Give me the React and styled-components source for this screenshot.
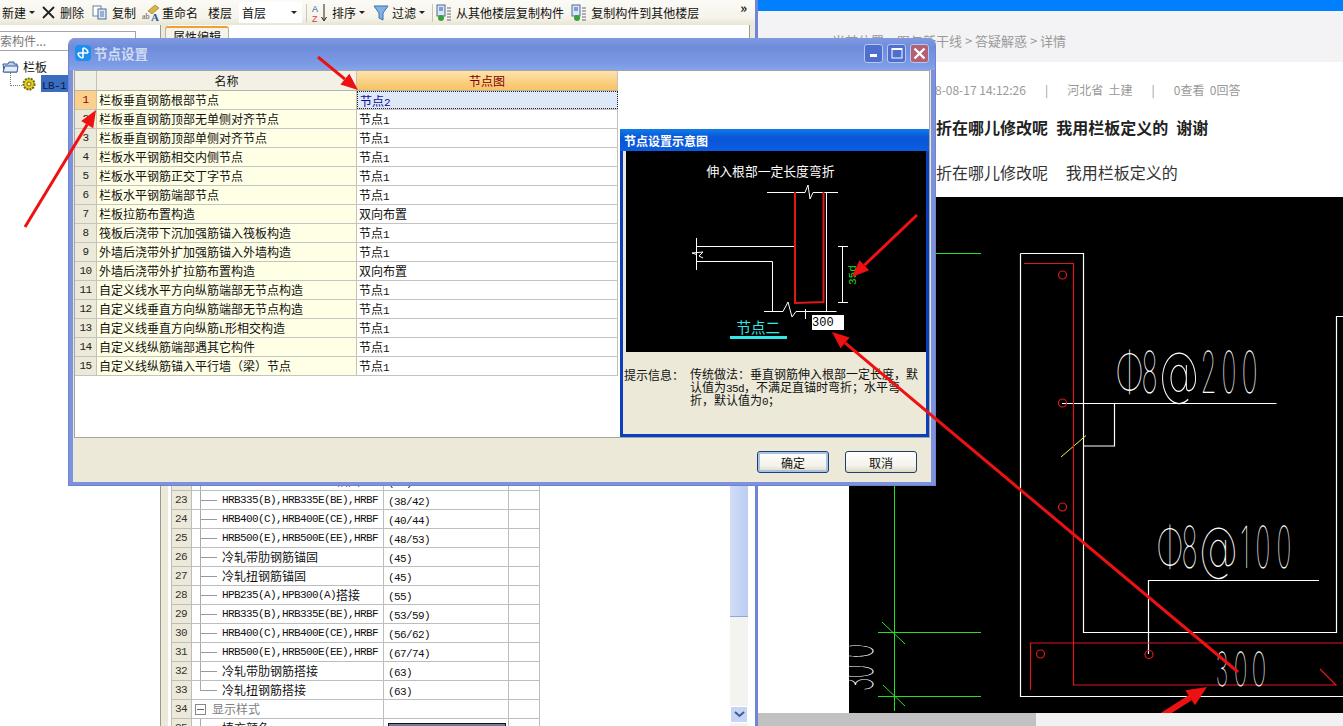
import styled, { createGlobalStyle } from "styled-components";

const GlobalStyle = createGlobalStyle`
  html, body {
    margin: 0;
    padding: 0;
    overflow: hidden;
    background: #fff;
  }
  body {
    font-family: "Noto Sans CJK SC", "Liberation Sans", sans-serif;
    font-size: 12px;
    color: #111;
  }
  * { box-sizing: border-box; }
`;

const nodeRows = [
  ["栏板垂直钢筋根部节点", "节点2"],
  ["栏板垂直钢筋顶部无单侧对齐节点", "节点1"],
  ["栏板垂直钢筋顶部单侧对齐节点", "节点1"],
  ["栏板水平钢筋相交内侧节点", "节点1"],
  ["栏板水平钢筋正交丁字节点", "节点1"],
  ["栏板水平钢筋端部节点", "节点1"],
  ["栏板拉筋布置构造", "双向布置"],
  ["筏板后浇带下沉加强筋锚入筏板构造", "节点1"],
  ["外墙后浇带外扩加强筋锚入外墙构造", "节点1"],
  ["外墙后浇带外扩拉筋布置构造", "双向布置"],
  ["自定义线水平方向纵筋端部无节点构造", "节点1"],
  ["自定义线垂直方向纵筋端部无节点构造", "节点1"],
  ["自定义线垂直方向纵筋L形相交构造", "节点1"],
  ["自定义线纵筋端部遇其它构件", "节点1"],
  ["自定义线纵筋锚入平行墙（梁）节点", "节点1"],
];

const propRows = [
  [22, "HPB235(A),HPB300(A)锚固", "(35)"],
  [23, "HRB335(B),HRB335E(BE),HRBF", "(38/42)"],
  [24, "HRB400(C),HRB400E(CE),HRBF", "(40/44)"],
  [25, "HRB500(E),HRB500E(EE),HRBF", "(48/53)"],
  [26, "冷轧带肋钢筋锚固", "(45)"],
  [27, "冷轧扭钢筋锚固", "(45)"],
  [28, "HPB235(A),HPB300(A)搭接", "(55)"],
  [29, "HRB335(B),HRB335E(BE),HRBF", "(53/59)"],
  [30, "HRB400(C),HRB400E(CE),HRBF", "(56/62)"],
  [31, "HRB500(E),HRB500E(EE),HRBF", "(67/74)"],
  [32, "冷轧带肋钢筋搭接", "(63)"],
  [33, "冷轧扭钢筋搭接", "(63)"],
];

// half width latin like the old bitmap font of the program
function Mixed({ text }) {
  return text
    .split(/([\x20-\x7e]+)/)
    .map((part, i) =>
      /^[\x20-\x7e]+$/.test(part) ? <Latin key={i}>{part}</Latin> : part
    );
}

function Arrow({ x1, y1, x2, y2, width = 3, head = 17, wing = 7 }) {
  const len = Math.hypot(x2 - x1, y2 - y1);
  const ux = (x2 - x1) / len;
  const uy = (y2 - y1) / len;
  const bx = x2 - ux * head;
  const by = y2 - uy * head;
  const points = `${x2},${y2} ${bx - uy * wing},${by + ux * wing} ${bx + uy * wing},${by - ux * wing}`;
  return (
    <g>
      <line x1={x1} y1={y1} x2={bx} y2={by} stroke="#ee1111" strokeWidth={width} />
      <polygon points={points} fill="#ee1111" />
    </g>
  );
}

// cad text: every glyph squeezed to the width it has in the drawing,
// the extra 24% is for the side bearings of the font
function CadLabel({ y, size, glyphs, ...rest }) {
  return (
    <g {...rest}>
      {glyphs.map(([ch, x, w], i) => (
        <CadText
          key={i}
          x={x - w * 0.12}
          y={y}
          fontSize={size}
          textLength={w * 1.24}
          lengthAdjust="spacingAndGlyphs"
        >
          {ch}
        </CadText>
      ))}
    </g>
  );
}

function CopyIcon() {
  return (
    <svg width="15" height="15" viewBox="0 0 15 15">
      <rect x="1" y="1" width="8" height="10" fill="#fff" stroke="#6a7f9e" />
      <rect x="6" y="4" width="8" height="10" fill="#dfe8f6" stroke="#4a6a9a" />
      <path d="M8 7h4M8 9h4M8 11h4" stroke="#5577aa" />
    </svg>
  );
}

function RenameIcon() {
  return (
    <svg width="18" height="18" viewBox="0 0 18 18">
      <path d="M6 7 13 1l4 3-7 6z" fill="#d9b44a" stroke="#8a6d20" strokeWidth=".6" />
      <text x="0" y="15" fontSize="8" fill="#555" fontFamily="Liberation Serif">ab</text>
      <text x="9" y="17" fontSize="11" fontWeight="700" fill="#2a55a5" fontFamily="Liberation Serif">A</text>
    </svg>
  );
}

function SortIcon() {
  return (
    <svg width="18" height="20" viewBox="0 0 18 20">
      <text x="1" y="9" fontSize="9" fill="#3355aa" fontFamily="Liberation Sans">A</text>
      <text x="1" y="19" fontSize="9" fill="#cc4444" fontFamily="Liberation Sans">Z</text>
      <path d="M13 1v16M10.5 14l2.5 4 2.5-4" stroke="#222" fill="none" />
    </svg>
  );
}

function FilterIcon() {
  return (
    <svg width="16" height="16" viewBox="0 0 16 16">
      <path d="M1 1h14L10 8v7L6 13V8z" fill="#7fb2e5" stroke="#3d6fa8" />
    </svg>
  );
}

function FloorCopyIcon({ flip }) {
  return (
    <svg width="16" height="18" viewBox="0 0 16 18">
      <rect x="1" y="1" width="8" height="11" fill="#dbe6f6" stroke="#4a6a9a" />
      <path d="M3 4h4M3 6h4" stroke="#3355aa" />
      <path d="M11 4h4M11 7h4M11 10h4M11 13h4M11 16h4" stroke="#667" />
      <circle cx={flip ? 6 : 5} cy="14" r="3" fill="#3aa03a" />
    </svg>
  );
}

function CadDrawing() {
  return (
    <CadSvg viewBox="849 197 494 516">
      <g stroke="#22e022" fill="none">
        <path d="M936 253.5H981M878 632.5H981M878 696.5H981M894.5 486V711" />
        <path d="M882 622 905 644M883 685 905 706" />
      </g>
      <g stroke="#fff" fill="none" strokeWidth="1.2">
        <path d="M1020.5 253.5H1083.5V632.5H1336.5V316.5H1343M1020.5 253.5V696.5H1343" />
        <path d="M1062 403.5H1276.5M1114.5 403.5V446H1083.5" />
        <path d="M1148.5 654V580.5H1319" />
      </g>
      <path d="M1061 457 1086 435.5" stroke="#eeee44" fill="none" />
      <g stroke="#e01818" fill="none" strokeWidth="1.2">
        <path d="M1024 263.5H1073.5V685H1336L1320 669" />
        <path d="M1343 643H1030.5V690" />
        <circle cx="1062.5" cy="275" r="4" />
        <circle cx="1062.5" cy="403" r="4" />
        <circle cx="1062.5" cy="507" r="4" />
        <circle cx="1040.5" cy="654" r="4" />
        <circle cx="1149" cy="654.5" r="4" />
      </g>
      <CadLabel
        y={393}
        size={58}
        glyphs={[
          ["Φ", 1118, 23],
          ["8", 1143, 13],
          ["@", 1163, 32],
          ["2", 1202, 13],
          ["0", 1223, 12],
          ["0", 1243, 13],
        ]}
      />
      <CadLabel
        y={568}
        size={58}
        glyphs={[
          ["Φ", 1159, 22],
          ["8", 1183, 13],
          ["@", 1203, 31],
          ["1", 1241, 8],
          ["0", 1257, 12],
          ["0", 1278, 12],
        ]}
      />
      <CadLabel
        y={686}
        size={47}
        glyphs={[
          ["3", 1217, 10],
          ["0", 1235, 11],
          ["0", 1253, 12],
        ]}
      />
      <CadLabel
        transform="translate(873 690) rotate(-90)"
        y={0}
        size={47}
        glyphs={[
          ["3", 0, 11],
          ["0", 13, 11],
          ["0", 33, 12],
        ]}
      />
      <Arrow x1={1160} y1={717} x2={1207} y2={687} width={6} head={20} wing={9} />
    </CadSvg>
  );
}

function NodeDiagram() {
  return (
    <DiagramSvg viewBox="626 152 298 201">
      <DiagramTitle x="770.5" y="177" textAnchor="middle">伸入根部一定长度弯折</DiagramTitle>
      <g stroke="#fff" fill="none">
        <path d="M767 193.5H805L808 186 810 200 813 193.5H838" />
        <path d="M826.5 193.5V313" />
        <path d="M696.5 247.5H794M696.5 262.5H772.5V312.5" />
        <path d="M696.5 239V271M696.5 255.5 692 254 703 253 699 257 703 259" />
        <path d="M764 312.5H783L788 303 792 318 796 312.5H836.5" />
        <path d="M805.5 310V320" />
        <path d="M842.5 247.5V303.5M838 247.5H848M838 303.5H848" />
      </g>
      <path d="M795 193V304L823.5 303V193" stroke="#e01818" strokeWidth="2" fill="none" />
      <DiagramDim transform="translate(856 286) rotate(-90)">35d</DiagramDim>
      <DiagramLabel x="736.5" y="334">节点二</DiagramLabel>
      <rect x="730" y="337" width="57" height="3" fill="#30e8e8" />
      <rect x="812" y="316" width="32" height="15" fill="#fff" />
      <DiagramValue x="812" y="327">300</DiagramValue>
    </DiagramSvg>
  );
}

export default function App() {
  return (
    <Page>
      <GlobalStyle />
      <AppWindow>
        <Toolbar>
          <ToolText $ml={2}>新建</ToolText>
          <Caret $ml={3} />
          <ToolIcon $ml={7}>
            <svg width="13" height="13" viewBox="0 0 13 13">
              <path d="M1 1 12 12M12 1 1 12" stroke="#222" strokeWidth="1.8" />
            </svg>
          </ToolIcon>
          <ToolText $ml={5}>删除</ToolText>
          <ToolIcon $ml={8}><CopyIcon /></ToolIcon>
          <ToolText $ml={5}>复制</ToolText>
          <ToolIcon $ml={6}><RenameIcon /></ToolIcon>
          <ToolText $ml={2}>重命名</ToolText>
          <ToolText $ml={10}>楼层</ToolText>
          <FloorSelect>
            首层
            <Caret />
          </FloorSelect>
          <ToolSep $ml={4} />
          <ToolIcon $ml={4}><SortIcon /></ToolIcon>
          <ToolText $ml={3}>排序</ToolText>
          <Caret $ml={3} />
          <ToolIcon $ml={8}><FilterIcon /></ToolIcon>
          <ToolText $ml={3}>过滤</ToolText>
          <Caret $ml={3} />
          <ToolSep $ml={7} />
          <ToolIcon $ml={3}><FloorCopyIcon /></ToolIcon>
          <ToolText $ml={4}>从其他楼层复制构件</ToolText>
          <ToolIcon $ml={7}><FloorCopyIcon flip /></ToolIcon>
          <ToolText $ml={4}>复制构件到其他楼层</ToolText>
          <More>»</More>
        </Toolbar>
        <Workspace>
          <TreePane>
            <SearchBox><SearchText>搜索构件...</SearchText></SearchBox>
            <TreeFolder>
              <svg width="17" height="13" viewBox="0 0 17 13">
                <path d="M1 4h5l1-2h5v2h3v8H2z" fill="#bcd0ec" stroke="#3d5f95" />
                <path d="M1 12 3 6h13l-1 6z" fill="#e4edf8" stroke="#3d5f95" />
              </svg>
              栏板
            </TreeFolder>
            <TreeLeaf>
              <TreeDots />
              <svg width="14" height="14" viewBox="0 0 14 14">
                <circle cx="7" cy="7" r="5.5" fill="#e8cc20" stroke="#6a6a10" strokeDasharray="2 1" strokeWidth="2" />
                <circle cx="7" cy="7" r="2" fill="#fff6a0" stroke="#6a6a10" />
              </svg>
              <TreeSelected><Latin>LB-1</Latin></TreeSelected>
            </TreeLeaf>
          </TreePane>
          <PropsPane>
            <TabStrip><PropsTab>属性编辑</PropsTab></TabStrip>
            <PropsBody>
              <PropsGrid>
                {propRows.map(([n, name, value], i) => (
                  <PropRow key={n}>
                    <PropNum>{n}</PropNum>
                    <PropName>
                      <TreeStub $last={i === propRows.length - 1} />
                      <Mixed text={name} />
                    </PropName>
                    <PropValue><Latin>{value}</Latin></PropValue>
                    <PropExtra />
                  </PropRow>
                ))}
                <PropRow>
                  <PropNum>34</PropNum>
                  <PropName>
                    <MinusBox />
                    <GroupLabel>显示样式</GroupLabel>
                  </PropName>
                  <PropValue />
                  <PropExtra />
                </PropRow>
                <PropRow>
                  <PropNum>35</PropNum>
                  <PropName><TreeStub />填充颜色</PropName>
                  <PropValue><Swatch /></PropValue>
                  <PropExtra />
                </PropRow>
              </PropsGrid>
              <ScrollBar>
                <ScrollThumb />
                <ScrollDown>
                  <svg width="11" height="7" viewBox="0 0 11 7">
                    <path d="M1 1l4.5 4L10 1" stroke="#3d5f95" strokeWidth="2" fill="none" />
                  </svg>
                </ScrollDown>
              </ScrollBar>
            </PropsBody>
          </PropsPane>
        </Workspace>
      </AppWindow>

      <Browser>
        <BlueBar />
        <Crumbs>当前位置 &gt; 跟与新干线 &gt; 答疑解惑 &gt; 详情</Crumbs>
        <Article>
          <Meta>
            <span>2018-08-17 14:12:26</span>
            <MetaSep>|</MetaSep>
            <span>河北省&nbsp;&nbsp;土建</span>
            <MetaSep>|</MetaSep>
            <span>0查看&nbsp;&nbsp;0回答</span>
          </Meta>
          <QuestionTitle>栏板钢筋弯折在哪儿修改呢 我用栏板定义的 谢谢</QuestionTitle>
          <QuestionBody>栏板钢筋弯折在哪儿修改呢{"   "}我用栏板定义的</QuestionBody>
          <CadImage><CadDrawing /></CadImage>
        </Article>
        <BottomScroll><BottomThumb /></BottomScroll>
      </Browser>

      <Dialog>
        <DialogTitle>
          <DialogIcon>
            <svg width="12" height="12" viewBox="0 0 12 12">
              <path d="M6 1v10M1 6h10M6 1a5 5 0 0 1 5 5M1 6a5 5 0 0 0 5 5" stroke="#fff" strokeWidth="1.6" fill="none" />
            </svg>
          </DialogIcon>
          <DialogCaption>节点设置</DialogCaption>
          <WinButtons>
            <WinButton>
              <svg width="10" height="10" viewBox="0 0 10 10"><rect x="1" y="6" width="7" height="3" fill="#fff" /></svg>
            </WinButton>
            <WinButton>
              <svg width="12" height="12" viewBox="0 0 12 12"><rect x="1" y="1.5" width="10" height="9.5" fill="none" stroke="#fff" /><rect x="1" y="1" width="10" height="2" fill="#fff" /></svg>
            </WinButton>
            <WinButton $close>
              <svg width="13" height="13" viewBox="0 0 13 13"><path d="M1.5 1.5l10 10M11.5 1.5l-10 10" stroke="#fff" strokeWidth="2.4" /></svg>
            </WinButton>
          </WinButtons>
        </DialogTitle>
        <DialogBody>
          <NodeTable>
            <NodeHead>
              <Corner />
              <HeadName>名称</HeadName>
              <HeadNode>节点图</HeadNode>
            </NodeHead>
            {nodeRows.map(([name, node], i) => (
              <NodeRow key={name}>
                <NodeNum $active={i === 0}>{i + 1}</NodeNum>
                <NodeName><Mixed text={name} /></NodeName>
                <NodeValue $active={i === 0}><Mixed text={node} /></NodeValue>
              </NodeRow>
            ))}
          </NodeTable>
          <PreviewPanel>
            <PreviewTitle>节点设置示意图</PreviewTitle>
            <PreviewCanvas><NodeDiagram /></PreviewCanvas>
            <TipArea>
              <TipLabel>提示信息：</TipLabel>
              <TipText>
                <TipLine><Mixed text="传统做法：垂直钢筋伸入根部一定长度，默" /></TipLine>
                <TipLine><Mixed text="认值为35d，不满足直锚时弯折；水平弯" /></TipLine>
                <TipLine><Mixed text="折，默认值为0；" /></TipLine>
              </TipText>
            </TipArea>
          </PreviewPanel>
        </DialogBody>
        <DialogFooter>
          <DialogButton $primary>确定</DialogButton>
          <DialogButton>取消</DialogButton>
        </DialogFooter>
      </Dialog>

      <Annotations viewBox="0 0 1343 726">
        <Arrow x1={318} y1={57} x2={358} y2={90} />
        <Arrow x1={25} y1={227} x2={96} y2={110} />
        <Arrow x1={917} y1={215} x2={852} y2={277} />
        <Arrow x1={1238} y1={672} x2={832} y2={332} />
      </Annotations>
    </Page>
  );
}

const Page = styled.div`
  position: relative;
  display: flex;
  width: 1343px;
  height: 726px;
  overflow: hidden;
`;

const Latin = styled.span`
  font-family: "Liberation Mono", monospace;
  font-size: 11px;
  letter-spacing: -0.6px;
  line-height: 1;
`;

/* left program window */
const AppWindow = styled.div`
  display: flex;
  flex-direction: column;
  width: 758px;
  height: 726px;
  border-right: 3px solid #6f86d6;
  background: #ece9d8;
`;

const Toolbar = styled.div`
  display: flex;
  align-items: center;
  height: 25px;
  flex-shrink: 0;
  background: linear-gradient(#fbfaf5, #f6f4ea 70%, #e8e5d4);
`;

const ToolText = styled.span`
  margin-left: ${(p) => p.$ml || 0}px;
  white-space: nowrap;
  line-height: 25px;
`;

const ToolIcon = styled.span`
  display: inline-flex;
  margin-left: ${(p) => p.$ml || 0}px;
`;

const Caret = styled.span`
  flex-shrink: 0;
  margin-left: ${(p) => p.$ml || 0}px;
  border-left: 3px solid transparent;
  border-right: 3px solid transparent;
  border-top: 3px solid #222;
`;

const ToolSep = styled.span`
  width: 1px;
  height: 18px;
  margin-left: ${(p) => p.$ml || 0}px;
  background: #c8c6b4;
`;

const FloorSelect = styled.div`
  display: flex;
  align-items: center;
  justify-content: space-between;
  width: 63px;
  height: 21px;
  margin-left: 7px;
  padding: 0 5px 0 3px;
  background: #fff;
`;

const More = styled.span`
  margin-left: 41px;
  font-size: 13px;
  font-weight: 700;
  line-height: 14px;
  align-self: flex-start;
  padding-top: 1px;
`;

const Workspace = styled.div`
  display: flex;
  flex: 1;
  min-height: 0;
`;

const TreePane = styled.div`
  width: 161px;
  flex-shrink: 0;
  padding-top: 6px;
  background: #fff;
  border-right: 1px solid #9a9a90;
`;

const SearchBox = styled.div`
  width: 136px;
  height: 20px;
  overflow: hidden;
  border: 1px solid #a5a5a5;
  border-left: 0;
  color: #777;
  line-height: 18px;
`;

const SearchText = styled.span`
  display: block;
  margin-left: -12px;
  white-space: nowrap;
`;

const TreeFolder = styled.div`
  display: flex;
  align-items: center;
  gap: 4px;
  height: 17px;
  margin-top: 7px;
  padding-left: 2px;
`;

const TreeLeaf = styled.div`
  display: flex;
  align-items: center;
  height: 17px;
  padding-left: 10px;
`;

const TreeDots = styled.span`
  width: 12px;
  height: 14px;
  margin-top: -10px;
  border-left: 1px dotted #777;
  border-bottom: 1px dotted #777;
`;

const TreeSelected = styled.span`
  width: 27px;
  height: 17px;
  margin-left: 5px;
  padding-left: 1px;
  line-height: 17px;
  color: #0a1a44;
  background: #3a6cc0;
`;

const PropsPane = styled.div`
  display: flex;
  flex-direction: column;
  flex: 1;
  min-width: 0;
  padding-left: 7px;
`;

const TabStrip = styled.div`
  display: flex;
  align-items: flex-start;
  height: 27px;
  margin-right: 5px;
  padding-top: 1px;
  background: #fff;
  border-right: 1px solid #9a9a90;
`;

const PropsTab = styled.div`
  width: 64px;
  height: 26px;
  margin-left: -3px;
  text-align: center;
  border: 1px solid #b8b6a4;
  border-top: 2px solid #f0a030;
  border-radius: 3px 3px 0 0;
  background: #f6f4ea;
`;

const PropsBody = styled.div`
  display: flex;
  flex: 1;
  min-height: 0;
  background: #fff;
`;

const PropsGrid = styled.div`
  width: 562px;
  padding: 420px 0 0 3px;
  overflow: hidden;
`;

const PropRow = styled.div`
  display: grid;
  grid-template-columns: 20px 192px 125px 32px;
  grid-template-rows: 18px;
  width: 369px;
  height: 19px;
  flex-shrink: 0;
  border-bottom: 1px solid #bdbdbd;
  line-height: 18px;
`;

const PropNum = styled.div`
  padding-left: 3px;
  font-family: "Liberation Mono", monospace;
  font-size: 11px;
  letter-spacing: -0.6px;
  background: #ece9d8;
  color: #333;
  border-left: 1px solid #bdbdbd;
`;

const PropName = styled.div`
  display: flex;
  align-items: center;
  padding-left: 3px;
  white-space: nowrap;
  overflow: hidden;
  border-left: 1px solid #bdbdbd;
`;

const PropValue = styled.div`
  padding-left: 4px;
  border-left: 1px solid #bdbdbd;
`;

const PropExtra = styled.div`
  border-left: 1px solid #bdbdbd;
  border-right: 1px solid #bdbdbd;
`;

const TreeStub = styled.span`
  flex-shrink: 0;
  width: 17px;
  height: ${(p) => (p.$last ? "10px" : "19px")};
  margin: ${(p) => (p.$last ? "-9px 5px 0 5px" : "0 5px 0 5px")};
  border-left: 1px solid #aaa;
  background: linear-gradient(#999, #999) no-repeat 0 ${(p) => (p.$last ? "100%" : "50%")} / 100% 1px;
`;

const MinusBox = styled.span`
  flex-shrink: 0;
  width: 11px;
  height: 11px;
  border: 1px solid #888;
  background: linear-gradient(#999, #333) no-repeat center / 7px 1px;
`;

const GroupLabel = styled.span`
  margin-left: 6px;
  color: #808080;
`;

const Swatch = styled.div`
  width: 118px;
  height: 19px;
  margin-top: 4px;
  background: #77779a;
  border: 1px solid #111;
`;

const ScrollBar = styled.div`
  position: relative;
  width: 18px;
  margin-right: 7px;
  background: #f3f3ef;
`;

const ScrollThumb = styled.div`
  height: 565px;
  background: linear-gradient(90deg, #d2ddf6, #bccdf2);
  border-bottom: 1px solid #8fa8dc;
`;

const ScrollDown = styled.div`
  position: absolute;
  right: 0;
  bottom: 3px;
  display: flex;
  align-items: center;
  justify-content: center;
  width: 18px;
  height: 17px;
  background: #c6d5f4;
  border: 1px solid #fff;
`;

/* browser on the right */
const Browser = styled.div`
  display: flex;
  flex-direction: column;
  flex: 1;
  min-width: 0;
  background: #fff;
`;

const BlueBar = styled.div`
  height: 11px;
  background: #0080ff;
`;

const Crumbs = styled.div`
  height: 51px;
  padding: 21px 0 0 74px;
  font-size: 13px;
  line-height: 18px;
  color: #999;
  background: #f3f3f5;
`;

const Article = styled.div`
  flex: 1;
  min-height: 0;
  padding-left: 91px;
`;

const Meta = styled.div`
  display: flex;
  height: 57px;
  padding: 19px 0 0 66px;
  font-size: 12px;
  line-height: 18px;
  color: #999;
`;

const MetaSep = styled.span`
  margin: 0 19px;
`;

const QuestionTitle = styled.div`
  height: 41px;
  padding-left: 7px;
  font-size: 16px;
  font-weight: 700;
  line-height: 16px;
  color: #222;
  white-space: nowrap;
  word-spacing: 4.5px;
`;

const QuestionBody = styled.div`
  height: 37px;
  padding-left: 7px;
  font-size: 16px;
  line-height: 24px;
  color: #333;
  white-space: pre;
  word-spacing: 2.3px;
`;

const CadImage = styled.div`
  height: 516px;
  background: #000;
`;

const CadSvg = styled.svg`
  display: block;
  width: 494px;
  height: 516px;
  opacity: 0.999;
`;

const CadText = styled.text`
  font-family: "Inter", "Liberation Sans", sans-serif;
  font-weight: 100;
  fill: #fff;
  text-rendering: geometricPrecision;
`;

const BottomScroll = styled.div`
  height: 13px;
  background: #f1f1f1;
`;

const BottomThumb = styled.div`
  width: 278px;
  height: 13px;
  background: #c1c1c1;
`;

/* dialog window floats over both windows */
const Dialog = styled.div`
  position: absolute;
  left: 68px;
  top: 38px;
  display: flex;
  flex-direction: column;
  width: 868px;
  height: 448px;
  padding: 0 4px 3px;
  background: #ece9d8;
  border-radius: 7px 7px 0 0;
  border: 1px solid #6c84d2;
  border-width: 0 1px 1px;
  box-shadow: inset 4px 0 0 #7d92dc, inset -4px 0 0 #7d92dc, inset 0 -3px 0 #7d92dc;
`;

const DialogTitle = styled.div`
  display: flex;
  align-items: center;
  flex-shrink: 0;
  height: 32px;
  margin: 0 -4px;
  padding: 0 6px 2px 6px;
  border-radius: 7px 7px 0 0;
  background: linear-gradient(#7f9ae0, #6f8cda 30%, #7b9ae4 80%, #86a4ec);
`;

const DialogIcon = styled.span`
  display: flex;
  align-items: center;
  justify-content: center;
  width: 16px;
  height: 16px;
  border-radius: 4px;
  background: #1d8ff0;
`;

const DialogCaption = styled.span`
  margin-left: 3px;
  font-size: 13.5px;
  font-weight: 700;
  color: #d0dcf4;
`;

const WinButtons = styled.div`
  display: flex;
  gap: 4px;
  margin-left: auto;
`;

const WinButton = styled.span`
  display: flex;
  align-items: center;
  justify-content: center;
  width: 19px;
  height: 19px;
  border-radius: 3px;
  border: 1px solid #b9c8ee;
  background: ${(p) => (p.$close ? "#b45f72" : "#4f6fd0")};
`;

const DialogBody = styled.div`
  display: flex;
  height: 368px;
  margin: 0 1px;
  background: #fff;
  border: 1px solid #a5a5a5;
`;

const NodeTable = styled.div`
  width: 543px;
  flex-shrink: 0;
`;

const NodeHead = styled.div`
  display: grid;
  grid-template-columns: 22px 260px 261px;
  grid-template-rows: 19px;
  height: 20px;
  line-height: 19px;
  text-align: center;
  border-bottom: 1px solid #b5b3a4;
`;

const Corner = styled.div`
  background: #f0efe6;
  border-right: 1px solid #c4c2b4;
`;

const HeadName = styled.div`
  background: #f3f1e6;
  border-right: 1px solid #c4c2b4;
`;

const HeadNode = styled.div`
  color: #800000;
  background: linear-gradient(#fde3ab, #f8c265);
  border-right: 1px solid #c4c2b4;
`;

const NodeRow = styled.div`
  display: grid;
  grid-template-columns: 22px 260px 261px;
  grid-template-rows: 18px;
  height: 19px;
  line-height: 18px;
  border-bottom: 1px solid #c4c4c0;
`;

const NodeNum = styled.div`
  text-align: center;
  font-family: "Liberation Mono", monospace;
  font-size: 11px;
  letter-spacing: -0.6px;
  color: ${(p) => (p.$active ? "#8a0000" : "#222")};
  background: ${(p) => (p.$active ? "#fbcf8c" : "#ece9d8")};
  border-right: 1px solid #c4c2b4;
`;

const NodeName = styled.div`
  padding-left: 2px;
  white-space: nowrap;
  background: #ffffe6;
  border-right: 1px solid #c4c2b4;
`;

const NodeValue = styled.div`
  padding-left: 2px;
  color: ${(p) => (p.$active ? "#0a0aa0" : "#111")};
  background: ${(p) => (p.$active ? "#dfe8f6" : "#fff")};
  border: ${(p) => (p.$active ? "1px dotted #222" : "0")};
  border-right: ${(p) => (p.$active ? "1px dotted #222" : "1px solid #c4c2b4")};
`;

const PreviewPanel = styled.div`
  display: flex;
  flex-direction: column;
  width: 310px;
  height: 308px;
  margin: auto 0 0 2px;
  background: #ece9d8;
  border: solid #0b3fbe;
  border-width: 0 3px 3px;
`;

const PreviewTitle = styled.div`
  height: 22px;
  margin: 0 -3px;
  padding: 1px 0 0 4px;
  font-weight: 700;
  line-height: 21px;
  color: #fff;
  background: linear-gradient(#0f7be8, #0a55d8 40%, #0b5de0);
`;

const PreviewCanvas = styled.div`
  height: 201px;
  margin: 0 0 0 3px;
  background: #000;
`;

const DiagramSvg = styled.svg`
  display: block;
  width: 298px;
  height: 201px;
`;

const DiagramTitle = styled.text`
  fill: #fff;
  font-size: 12.8px;
`;

const DiagramDim = styled.text`
  fill: #22dd22;
  font-family: "Liberation Mono", monospace;
  font-size: 11px;
`;

const DiagramLabel = styled.text`
  fill: #30e8e8;
  font-size: 14.5px;
`;

const DiagramValue = styled.text`
  fill: #000;
  font-family: "Liberation Mono", monospace;
  font-size: 12px;
`;

const TipArea = styled.div`
  display: flex;
  flex: 1;
  padding: 16px 0 0 1px;
`;

const TipLabel = styled.div`
  width: 66px;
  flex-shrink: 0;
  line-height: 13px;
`;

const TipText = styled.div`
  white-space: nowrap;
`;

const TipLine = styled.div`
  height: 13px;
  line-height: 12px;
`;

const DialogFooter = styled.div`
  display: flex;
  justify-content: flex-end;
  gap: 16px;
  padding: 13px 14px 0 0;
`;

const DialogButton = styled.button`
  width: 72px;
  height: 22px;
  padding: 0;
  font: inherit;
  color: #111;
  border-radius: 3px;
  border: 1px solid #1e3f6e;
  background: linear-gradient(#fff, #f3f2ea 70%, #dcd8c6);
  box-shadow: ${(p) => (p.$primary ? "inset 0 0 0 2px #a9c1e6" : "none")};
`;

const Annotations = styled.svg`
  position: absolute;
  inset: 0;
  width: 1343px;
  height: 726px;
  pointer-events: none;
`;
